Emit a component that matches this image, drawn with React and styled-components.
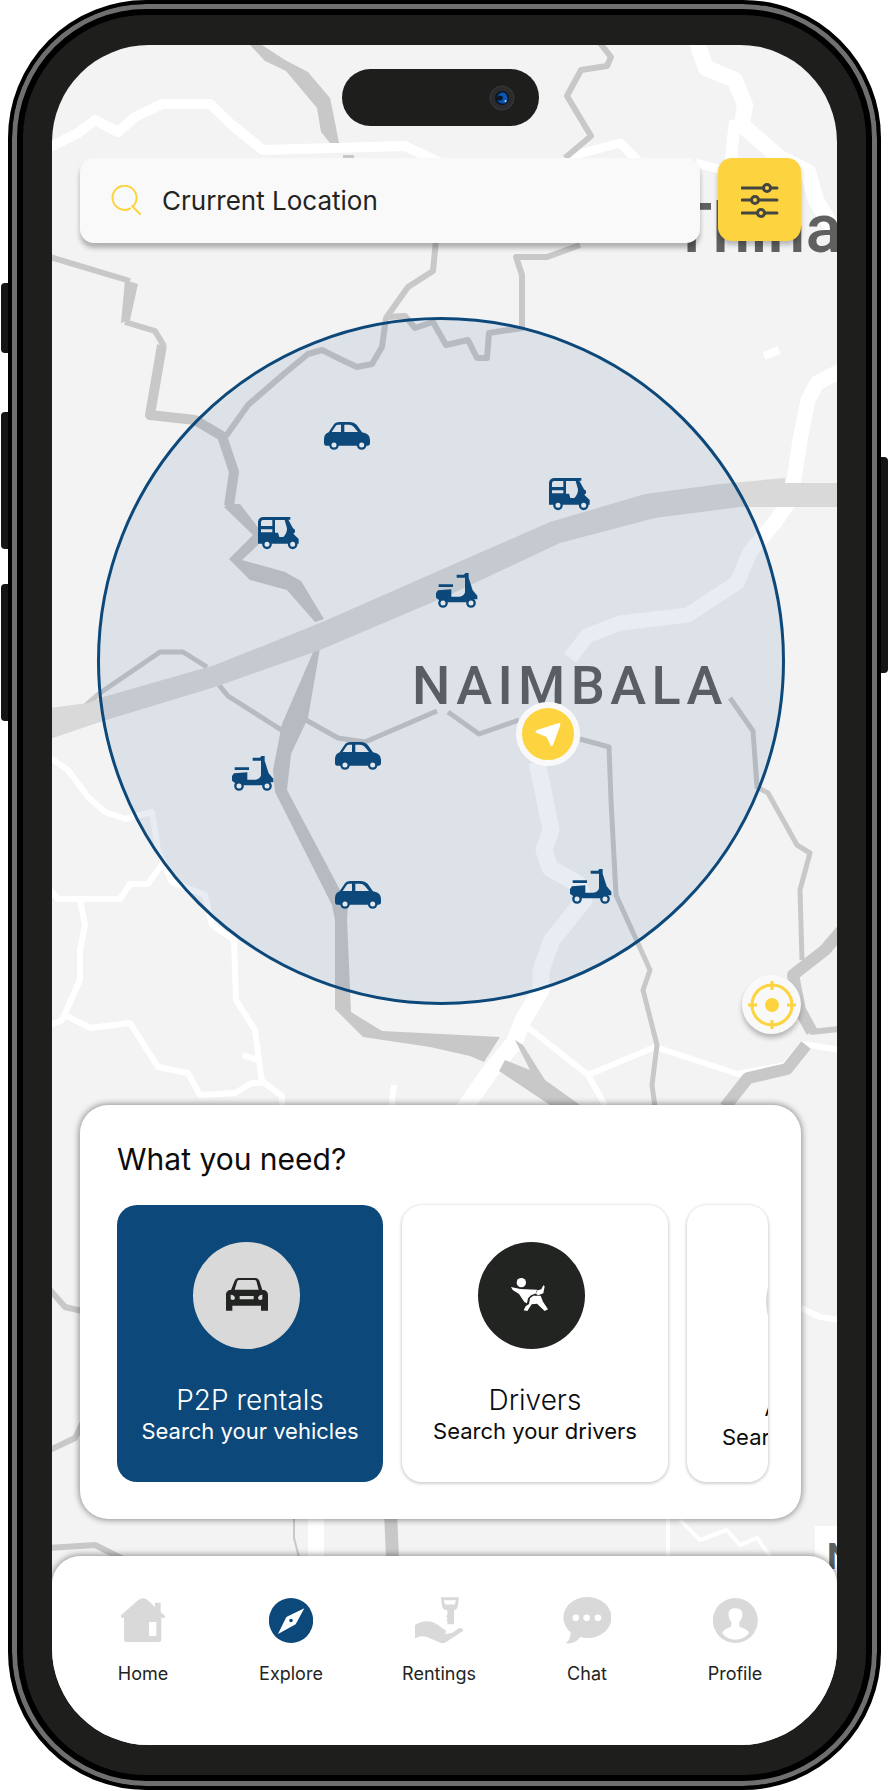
import React from "react";
import styled, { createGlobalStyle } from "styled-components";

const navy = "#0c487a";
const yellow = "#fdd43f";
const ink = "#222422";
const muted = "#d9d9d9";

const GlobalStyle = createGlobalStyle`
  *, *::before, *::after { box-sizing: border-box; }
  body { margin: 0; background: #fff; font-family: Inter, "Liberation Sans", sans-serif; color: ${ink}; }
  button, input { font: inherit; color: inherit; }
  h1, h2, p { margin: 0; font-weight: 400; }
`;

/* ---------- Device ---------- */

const Page = styled.div`
  display: grid;
  grid-template-columns: 7px minmax(0, 1fr) 7px;
  min-height: 100vh;
  padding: 0 1px 1px;
`;

const Rail = styled.div`
  display: flex;
  flex-direction: column;
  padding-top: ${(p) => p.$top}px;
`;

const SideKey = styled.span`
  height: ${(p) => p.$size}px;
  margin-bottom: ${(p) => p.$after || 0}px;
  background: #151515;
  border-radius: ${(p) => (p.$right ? "0 4px 4px 0" : "4px 0 0 4px")};
`;

const Shell = styled.div`
  display: flex;
  padding: 41px 40px;
  background: #1e1e1c;
  border: 4px solid #000;
  border-radius: 138px;
  box-shadow: inset 0 0 0 5px #6f6f6f, inset 0 0 0 11px #000;
`;

const Screen = styled.main`
  position: relative;
  display: flex;
  flex-direction: column;
  flex: 1;
  min-width: 0;
  padding-top: 24px;
  overflow: hidden;
  background: #f3f3f3;
  border-radius: 97px;
`;

const Island = styled.div`
  position: relative;
  display: flex;
  align-items: center;
  justify-content: flex-end;
  align-self: center;
  width: 197px;
  height: 57px;
  margin-right: 8px;
  padding-right: 24px;
  background: #1e1e1c;
  border-radius: 29px;
`;

/* ---------- Map ---------- */

const MapCanvas = styled.div`
  position: absolute;
  inset: 0;
`;

const MapArt = styled.svg`
  display: block;
  width: 100%;
  height: 100%;
`;

const MapLabel = styled.span`
  position: absolute;
  left: ${(p) => p.$x}px;
  top: ${(p) => p.$y}px;
  font: ${(p) => p.$weight || 500} ${(p) => p.$size}px / 1 Roboto, "Liberation Sans", sans-serif;
  letter-spacing: ${(p) => (p.$tracked ? "0.1em" : "normal")};
  color: #606060;
  white-space: nowrap;
`;

const Radius = styled.div`
  position: absolute;
  top: 272px;
  left: 45px;
  right: 52px;
  aspect-ratio: 1;
  background: rgba(30, 75, 150, 0.1);
  border: 3px solid ${navy};
  border-radius: 50%;
`;

const Pin = styled.span`
  position: absolute;
  left: ${(p) => p.$x}px;
  top: ${(p) => p.$y}px;
  display: flex;
  color: ${navy};
`;

const Here = styled.span`
  position: absolute;
  left: 464px;
  top: 657px;
  display: grid;
  place-items: center;
  width: 64px;
  height: 64px;
  background: ${yellow};
  border: 6px solid #f9f9f9;
  border-radius: 50%;
`;

/* ---------- Controls ---------- */

const SearchRow = styled.form`
  position: relative;
  display: flex;
  gap: 18px;
  margin: 32px 36px 0 28px;
`;

const SearchBox = styled.label`
  display: flex;
  align-items: center;
  flex: 1;
  min-width: 0;
  height: 85px;
  gap: 20px;
  padding: 0 31px;
  background: #f9f9f9;
  border-radius: 14px;
  box-shadow: 0 5px 5px rgba(0, 0, 0, 0.28);
`;

const SearchInput = styled.input`
  flex: 1;
  min-width: 0;
  padding: 0;
  border: 0;
  outline: 0;
  background: none;
  font-size: 26px;
  line-height: 32px;
`;

const FilterButton = styled.button`
  display: grid;
  place-items: center;
  width: 83px;
  height: 83px;
  padding: 0;
  border: 0;
  border-radius: 14px;
  background: ${yellow};
  box-shadow: 0 4px 5px rgba(0, 0, 0, 0.25);
`;

const LocateButton = styled.button`
  position: relative;
  display: grid;
  place-items: center;
  align-self: flex-end;
  width: 59px;
  height: 59px;
  margin: auto 36px 71px 0;
  padding: 0;
  border: 0;
  border-radius: 50%;
  background: #f9f9f9;
  box-shadow: 0 4px 5px rgba(0, 0, 0, 0.25);
`;

/* ---------- Service panel ---------- */

const Panel = styled.section`
  position: relative;
  margin: 0 36px 37px 28px;
  padding: 36px 33px 37px 37px;
  background: #fff;
  border-radius: 28px;
  box-shadow: 0 0 6px 1px rgba(0, 0, 0, 0.42);
`;

const PanelTitle = styled.h1`
  margin-bottom: 28px;
  font-size: 30px;
  line-height: 36px;
  color: #0c0c0c;
`;

const Tiles = styled.div`
  display: grid;
  grid-template-columns: 266px 266px minmax(0, 1fr);
  gap: 19px;
`;

const Tile = styled.button`
  display: flex;
  justify-content: ${(p) => (p.$peek ? "flex-start" : "center")};
  min-width: 0;
  height: 277px;
  padding: ${(p) => (p.$peek ? 43 : 37)}px 0 0;
  overflow: hidden;
  border: 0;
  border-radius: 20px;
  background: ${(p) => (p.$active ? navy : "#fff")};
  color: ${(p) => (p.$active ? "#fff" : "#0c0c0c")};
  box-shadow: ${(p) => (p.$active ? "none" : "0 1px 3px 1px rgba(0, 0, 0, 0.18)")};
`;

const TileBody = styled.span`
  display: flex;
  flex-direction: column;
  align-items: center;
  flex: 0 0 ${(p) => (p.$peek ? 272 : 266)}px;
`;

const Badge = styled.span`
  display: grid;
  place-items: center;
  width: 107px;
  height: 107px;
  margin: 0 8px 34px 0;
  border-radius: 50%;
  background: ${(p) => (p.$dark ? ink : muted)};
  color: ${(p) => (p.$dark ? "#fff" : ink)};
`;

const TileName = styled.span`
  font-size: 28px;
  font-weight: 300;
  line-height: 34px;
`;

const TileHint = styled.span`
  font-size: 22px;
  font-weight: 400;
  line-height: 28px;
`;

/* ---------- Bottom bar ---------- */

const TabBar = styled.nav`
  position: relative;
  display: grid;
  grid-template-columns: repeat(5, minmax(0, 1fr));
  align-items: start;
  height: 189px;
  padding: 40px 28px 0 17px;
  background: #fff;
  border-radius: 28px 28px 0 0;
  box-shadow: 0 0 6px 1px rgba(0, 0, 0, 0.42);
`;

const Tab = styled.a`
  display: flex;
  flex-direction: column;
  align-items: center;
  gap: 15px;
  color: ${ink};
  font-size: 18px;
  line-height: 30px;
  text-decoration: none;
`;

const TabIcon = styled.span`
  display: grid;
  place-items: center;
  height: 48px;
  color: ${(p) => (p.$active ? navy : muted)};
`;

/* ---------- Icons ---------- */

const Glyph = ({ w, h, box, children }) => (
  <svg width={w} height={h} viewBox={`0 0 ${box}`} fill="currentColor" fillRule="evenodd" aria-hidden="true">
    {children}
  </svg>
);

const Wheel = ({ x, y }) => (
  <circle cx={x} cy={y} r="11" fill="#e3e8ef" stroke="currentColor" strokeWidth="7" />
);

const CarIcon = () => (
  <Glyph w="46" h="28" box="138 84">
    <path d="M0 52Q0 36 14 31L28 10Q34 0 46 0H78Q90 0 98 8L114 31Q138 35 138 54V64Q138 71 130 71H6Q0 71 0 62ZM23 30L35 12Q38 8 43 8H51V30ZM61 8H75Q83 8 89 14L102 30H61Z" />
    <Wheel x="30" y="69" />
    <Wheel x="113" y="69" />
  </Glyph>
);

const TukIcon = () => (
  <Glyph w="41" h="33" box="123 99">
    <path d="M14 0H97V8H91L105 34L111 38V46L106 50L122 66V80H0V14Q2 2 14 0ZM9 15Q10 9 15 9H43V27H9ZM9 37H43V46H9ZM51 9H80Q83 20 87 34Q87 50 76 60H64L60 47H51Z" />
    <Wheel x="27" y="82" />
    <Wheel x="104" y="82" />
  </Glyph>
);

const ScooterIcon = () => (
  <Glyph w="42" h="35" box="126 105">
    <path d="M8 34H51V42H8ZM62 5H84L88 0H98V14L110 52L124 68V79H112L102 88H18L0 74V60L6 52L46 49V71H70Q84 70 87 58V14H62Z" />
    <Wheel x="21" y="90" />
    <Wheel x="105" y="90" />
  </Glyph>
);

const pinIcons = { car: CarIcon, tuk: TukIcon, scooter: ScooterIcon };

const SearchIcon = () => (
  <svg width="31" height="31" viewBox="0 0 31 31" fill="none" stroke={yellow} strokeWidth="2" strokeLinecap="round" aria-hidden="true">
    <path d="M19 23.500A12 12 0 1 1 23.500 19.500Q22 22 20.500 20.500L29 29" />
  </svg>
);

const FilterIcon = () => (
  <svg width="38" height="36" viewBox="0 0 38 36" fill={yellow} stroke="#454541" strokeWidth="3" strokeLinecap="round" aria-hidden="true">
    <path d="M1 6H36M1 18H36M1 31H36" />
    <circle cx="26" cy="6" r="3.500" />
    <circle cx="14" cy="18" r="3.500" />
    <circle cx="20" cy="31" r="3.500" />
  </svg>
);

const TargetIcon = () => (
  <svg width="48" height="48" viewBox="0 0 48 48" fill="none" stroke={yellow} strokeWidth="3" aria-hidden="true">
    <circle cx="24" cy="24" r="20" />
    <circle cx="24" cy="24" r="7" fill={yellow} stroke="none" />
    <path d="M24 0V9M24 39V48M0 24H9M39 24H48" />
  </svg>
);

const ArrowIcon = () => (
  <svg width="26" height="26" viewBox="0 0 26 26" fill="#fff" aria-hidden="true">
    <path d="M24 2Q26 2 25 5L18 24Q16 27 15 23L12 17Q11 15 9 15L2 12Q-1 11 2 9Z" />
  </svg>
);

const FrontCarIcon = () => (
  <Glyph w="43" h="35" box="129 105">
    <path d="M18 36L29 8Q32 0 40 0H92Q100 0 103 8L112 36H118Q129 40 129 52V98H108V83H22V98H3V52Q1 42 12 36ZM29 35H101L94 9Q93 6 88 6H43Q38 6 37 9ZM17 50V64Q28 69 30 60Q29 51 17 50ZM112 50V64Q101 69 99 60Q100 51 112 50ZM44 54H86V64H44Z" />
  </Glyph>
);

const DriverIcon = () => (
  <Glyph w="40" h="35" box="120 105">
    <circle cx="31" cy="14" r="14" />
    <path d="M0 27L28 33L78 35L76 46L60 52L51 61L48 76L40 72L24 48L5 36ZM75 38L91 34L97 22L101 25L97 46L81 52L76 48ZM57 61L67 53H89L96 71L111 94L101 99L78 77L62 79L49 99L38 97L44 85L54 78Z" />
  </Glyph>
);

const HomeIcon = () => (
  <Glyph w="44" h="44" box="132 132">
    <path d="M0 52L52 6Q66 -5 80 6L102 27V14H119V42L132 54V59H121V124Q121 132 113 132H16Q9 132 9 124V59H0ZM84 72H106V114H84Z" />
  </Glyph>
);

const CompassIcon = () => (
  <Glyph w="44" h="45" box="132 135">
    <path d="M66 0A66 67 0 1 1 66 135A66 67 0 1 1 66 0ZM106 31L52 57L27 108L80 79ZM66 62A5 5 0 1 0 66 73A5 5 0 1 0 66 62Z" />
  </Glyph>
);

const KeyHandIcon = () => (
  <Glyph w="48" h="47" box="145 141">
    <path d="M78 0H133L129 28Q127 37 118 40V82H98V74L95 70L98 65L95 59L98 52V40Q84 38 82 28ZM87 9L91 22H120L124 9ZM0 84Q34 64 64 80L92 100Q98 109 86 112L112 108L134 93Q146 92 145 102L100 132Q86 144 70 135L38 121Q18 113 0 125Z" />
  </Glyph>
);

const ChatIcon = () => (
  <Glyph w="48" h="47" box="144 142">
    <path d="M72 0A72 62 0 1 1 52 121Q34 144 8 140Q24 127 22 106A72 62 0 0 1 72 0ZM38 53A10 10 0 1 0 38 73A10 10 0 1 0 38 53ZM71 53A10 10 0 1 0 71 73A10 10 0 1 0 71 53ZM105 53A10 10 0 1 0 105 73A10 10 0 1 0 105 53Z" />
  </Glyph>
);

const ProfileIcon = () => (
  <Glyph w="45" h="45" box="135 135">
    <path d="M67 0A67 67 0 1 1 67 135A67 67 0 1 1 67 0ZM67 31C52 31 45 39 47 52Q48 66 55 71V82Q55 88 46 90Q30 95 28 106Q42 125 67 125Q92 125 108 106Q105 95 89 90Q79 88 79 82V71Q87 66 88 52C90 39 82 31 67 31Z" />
  </Glyph>
);

const Camera = () => (
  <svg width="26" height="26" viewBox="0 0 26 26" aria-hidden="true">
    <circle cx="13" cy="13" r="12" fill="#2b2b2d" stroke="#3c3c3e" />
    <circle cx="13" cy="13" r="7" fill="#0b1626" />
    <path d="M8 12Q12 5 17 9Q20 14 17 18Q11 20 8 15Q14 17 14 12Q11 9 8 12Z" fill="#0a57b4" />
    <circle cx="16.500" cy="16" r="1" fill="#bcd8f5" />
  </svg>
);

const Streets = () => (
  <MapArt viewBox="52 45 785 1700" preserveAspectRatio="xMidYMin slice" fill="none" strokeLinejoin="round" aria-hidden="true">
    <g stroke="#fff" strokeWidth="6">
      <path strokeWidth="10" d="M50 147L78 133L95 120L118 132L135 117L162 104H210L232 125L263 150L405 146L445 165" />
      <path strokeWidth="9" d="M568 157L620 143L642 165M696 163L722 170" />
      <path strokeWidth="16" d="M697 43L706 68L735 80L745 105L742 125L780 158L808 172L816 200L842 245" />
      <path strokeWidth="12" d="M735 120L731 160" />
      <path strokeWidth="8" d="M764 356L779 350" />
      <path strokeWidth="15" d="M842 370L817 383L808 400L800 440L793 487" />
      <path strokeWidth="15" d="M789 502L775 522L750 552L737 583L715 597L688 615L620 623L587 636L570 658" />
      <path strokeWidth="17" d="M537 762L545 800L551 830L544 850L550 868L578 884L584 900L552 940L541 970V990L523 1020L514 1043L489 1073L462 1112" />
      <path d="M525 1025L588 1075L605 1105M588 1075L655 1047L738 1074L785 1065L803 1044L840 1050" />
      <path d="M50 758L68 770L88 797L105 812L125 819L152 812L158 850L172 882L205 895L212 925L234 940L236 1000L255 1030L262 1083L252 1083L235 1093L200 1095L188 1073L158 1067L130 1023L90 1028L65 1015" />
      <path d="M50 890L58 899H120L130 884H148L163 863M80 900L85 925L80 950V980L62 1020L50 1025M262 1081L282 1096V1110M243 1055L258 1060M394 1085L391 1110" />
      <path strokeWidth="16" d="M316 1500V1570" />
      <path strokeWidth="4" d="M668 1500V1570M680 1520L700 1540L727 1530L740 1545L757 1538L770 1556" />
      <path d="M801 1308L820 1317L840 1320" />
    </g>
    <g fill="#c8c8c8">
      <path d="M250 45L262 45L285 60L308 72L330 98L333 112L339 143H330L321 132L317 108L286 71L265 61ZM343 155H354V160H343Z" />
      <path d="M125 280L138 284L130 320L121 323ZM229 504L240 504L260 530L258 545L242 560L285 572L301 581L324 619L315 622L287 590L250 580L229 559L253 535L224 507Z" />
      <path d="M314 650L320 648L308 718L291 754L287 790L348 905L347 920L351 1012L382 1031L500 1037L484 1062L470 1056L430 1047L363 1037L335 1009V920L332 905L275 792L273 770L282 724Z" />
      <path d="M515 1040L523 1045L545 1080L580 1105H550L499 1071L505 1060L530 1070Z" />
    </g>
    <g stroke="#c8c8c8" strokeWidth="6">
      <path d="M50 257L130 281M125 322L155 331L164 346M226 436L248 405L285 373L308 354L322 350L340 359L357 367L372 364L382 347L386 318L408 287L433 271L436 240" />
      <path strokeWidth="10" d="M162 345L150 415L195 420L222 436L234 472L229 506" />
      <path d="M388 317L405 316L415 328L433 322L446 345L468 340L477 358H487L489 333L522 328V275L516 257H547L580 245M600 43L611 57L607 66L581 70L567 96L591 136L565 158" />
      <path strokeWidth="5" d="M84 707L100 693L160 652H183L207 667M219 685L228 696L283 731M306 720L338 738L365 742L437 711M448 712L479 734L519 720M580 739L609 747L611 800L616 895L641 950L650 970L643 990L657 1045L652 1085L655 1107M730 698L753 731L757 787L768 793L797 845L810 853L800 890L802 960" />
      <path strokeWidth="12" d="M842 930L825 950L793 975L800 1010L812 1032M806 1045L787 1069L748 1078L725 1107" />
      <path d="M810 1032L840 1029M50 1290L65 1307L82 1311M50 1450L75 1438L84 1420M50 1548L95 1545L125 1560" />
      <path strokeWidth="2" d="M294 1500V1538L301 1565" />
      <path strokeWidth="13" d="M390 1500L393 1570" />
    </g>
    <path d="M50 708L88 703L103 697L215 665L320 623L445 568L550 522L645 494L720 484L785 478V483H840V507H740L655 518L560 543L445 597L320 650L215 687L103 721L50 739Z" fill="#d9d9d9" />
    <path d="M815 1526H840V1600H815Z" fill="#fff" />
  </MapArt>
);

/* ---------- Data ---------- */

const vehicles = [
  { kind: "car", x: 272, y: 377 },
  { kind: "tuk", x: 497, y: 433 },
  { kind: "tuk", x: 206, y: 472 },
  { kind: "scooter", x: 384, y: 528 },
  { kind: "scooter", x: 180, y: 711 },
  { kind: "car", x: 283, y: 697 },
  { kind: "car", x: 283, y: 836 },
  { kind: "scooter", x: 518, y: 824 },
];

const tabs = [
  { name: "Home", Icon: HomeIcon },
  { name: "Explore", Icon: CompassIcon, active: true },
  { name: "Rentings", Icon: KeyHandIcon },
  { name: "Chat", Icon: ChatIcon },
  { name: "Profile", Icon: ProfileIcon },
];

const services = [
  { name: "P2P rentals", hint: "Search your vehicles", Icon: FrontCarIcon, active: true },
  { name: "Drivers", hint: "Search your drivers", Icon: DriverIcon, dark: true },
  { name: "Assistant", hint: "Search your agents", peek: true },
];

export default function App() {
  return (
    <>
      <GlobalStyle />
      <Page>
        <Rail $top={283}>
          <SideKey $size={70} $after={59} />
          <SideKey $size={137} $after={35} />
          <SideKey $size={137} />
        </Rail>
        <Shell>
          <Screen>
            <MapCanvas>
              <Streets />
              <MapLabel $x={619} $y={150} $size={68}>Thina</MapLabel>
              <MapLabel $x={360} $y={614} $size={54} $tracked>NAIMBALA</MapLabel>
              <MapLabel $x={775} $y={1494} $size={36} $weight={700}>N</MapLabel>
              <Radius />
              {vehicles.map(({ kind, x, y }) => {
                const Icon = pinIcons[kind];
                return (
                  <Pin key={`${x}-${y}`} $x={x} $y={y}>
                    <Icon />
                  </Pin>
                );
              })}
              <Here><ArrowIcon /></Here>
            </MapCanvas>

            <Island><Camera /></Island>

            <SearchRow onSubmit={(e) => e.preventDefault()}>
              <SearchBox>
                <SearchIcon />
                <SearchInput type="text" aria-label="Location" defaultValue="Crurrent Location" />
              </SearchBox>
              <FilterButton type="button" aria-label="Filters"><FilterIcon /></FilterButton>
            </SearchRow>

            <LocateButton type="button" aria-label="Locate me"><TargetIcon /></LocateButton>

            <Panel>
              <PanelTitle>What you need?</PanelTitle>
              <Tiles>
                {services.map(({ name, hint, Icon, active, dark, peek }) => (
                  <Tile key={name} type="button" $active={active} $peek={peek}>
                    <TileBody $peek={peek}>
                      <Badge $dark={dark}>{Icon && <Icon />}</Badge>
                      <TileName>{name}</TileName>
                      <TileHint>{hint}</TileHint>
                    </TileBody>
                  </Tile>
                ))}
              </Tiles>
            </Panel>

            <TabBar>
              {tabs.map(({ name, Icon, active }) => (
                <Tab key={name} href={`#${name.toLowerCase()}`} aria-current={active ? "page" : undefined}>
                  <TabIcon $active={active}><Icon /></TabIcon>
                  {name}
                </Tab>
              ))}
            </TabBar>
          </Screen>
        </Shell>
        <Rail $top={457}>
          <SideKey $size={216} $right />
        </Rail>
      </Page>
    </>
  );
}
